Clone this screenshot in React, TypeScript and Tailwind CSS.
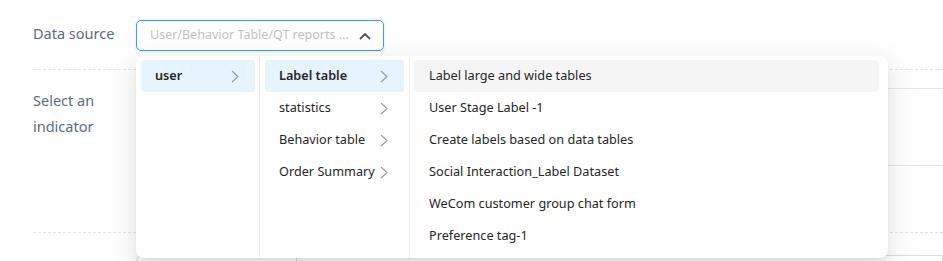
import React from 'react';

const Chevron = () => (
  <svg width="8" height="13" viewBox="0 0 8 13" fill="none" className="shrink-0">
    <path d="M1 1l6 5.5L1 12" stroke="#9a9a9a" strokeWidth="1.1" strokeLinejoin="round" />
  </svg>
);

const level1 = ['user'];
const level2 = ['Label table', 'statistics', 'Behavior table', 'Order Summary'];
const level3 = [
  'Label large and wide tables',
  'User Stage Label -1',
  'Create labels based on data tables',
  'Social Interaction_Label Dataset',
  'WeCom customer group chat form',
  'Preference tag-1',
];

export default function App() {
  return (
    <div className="relative w-[943px] h-[261px] overflow-hidden bg-white font-['Noto_Sans',sans-serif]">
      <div className="pl-[33px]">
        {/* data source row */}
        <div className="flex items-start pt-[20px] h-[70px] border-b border-dashed border-[#e3e3e3]">
          <div className="w-[103px] h-[27px] flex items-center text-[14.5px] text-[#5d6b7e]">Data source</div>
          <div className="w-[248px] h-[31px] rounded-[5px] border border-[#4096ff] shadow-[0_0_0_2px_rgba(5,145,255,0.06)] flex items-center pl-[13px] pr-[12px]">
            <span className="flex-1 text-[12.5px] text-[#bfbfbf] truncate">User/Behavior Table/QT reports ...</span>
            <svg width="12" height="8" viewBox="0 0 12 8" fill="none">
              <path d="M1.5 6.5L6 2l4.5 4.5" stroke="#595959" strokeWidth="1.8" strokeLinecap="round" strokeLinejoin="round" />
            </svg>
          </div>
        </div>

        {/* indicator row */}
        <div className="flex h-[163px] border-b border-dashed border-[#e3e3e3]">
          <div className="w-[103px] pt-[17px] text-[14.5px] leading-[26px] text-[#5d6b7e]">
            Select an
            <br />
            indicator
          </div>
          <div className="flex-1 pt-[18px]">
            <div className="border-t border-[#e6e6ee] h-[77px] bg-white"></div>
            <div className="border-t border-[#e6e6ee]"></div>
          </div>
        </div>

        {/* next row */}
        <div className="flex pt-[22px]">
          <div className="w-[103px]"></div>
          <div className="flex-1 h-[40px] rounded-tl-[6px] border border-[#dcdcdc] flex">
            <div className="w-[160px] border-r border-[#dcdcdc]"></div>
          </div>
        </div>
      </div>

      {/* cascader dropdown */}
      <div className="absolute left-[136px] top-[56px] w-[752px] h-[202px] rounded-[8px] bg-white flex shadow-[0_6px_16px_0_rgba(0,0,0,0.08),0_3px_6px_-4px_rgba(0,0,0,0.12),0_9px_28px_8px_rgba(0,0,0,0.05)]">
        <ul className="w-[124px] border-r border-[#ececec] pt-[4px] pl-[5px] pr-[4px]">
          {level1.map((t) => (
            <li key={t} className="h-[32px] rounded-[4px] bg-[#e6f4ff] flex items-center justify-between pl-[14px] pr-[16px] text-[12.7px] font-semibold text-[#262626]">
              {t}
              <Chevron />
            </li>
          ))}
        </ul>
        <ul className="w-[150px] border-r border-[#ececec] pt-[4px] pl-[5px] pr-[5px]">
          {level2.map((t, i) => (
            <li
              key={t}
              className={
                i === 0
                  ? 'h-[32px] rounded-[4px] bg-[#e6f4ff] flex items-center justify-between pl-[14px] pr-[16px] text-[12.7px] font-semibold text-[#262626]'
                  : 'h-[32px] rounded-[4px] flex items-center justify-between pl-[14px] pr-[16px] text-[12.7px] text-[#262626]'
              }
            >
              {t}
              <Chevron />
            </li>
          ))}
        </ul>
        <ul className="flex-1 pt-[4px] pl-[4px] pr-[9px]">
          {level3.map((t, i) => (
            <li
              key={t}
              className={
                i === 0
                  ? 'h-[32px] rounded-[4px] bg-[#f5f5f5] flex items-center pl-[15px] text-[12.7px] text-[#262626]'
                  : 'h-[32px] flex items-center pl-[15px] text-[12.7px] text-[#262626]'
              }
            >
              {t}
            </li>
          ))}
        </ul>
      </div>
    </div>
  );
}
